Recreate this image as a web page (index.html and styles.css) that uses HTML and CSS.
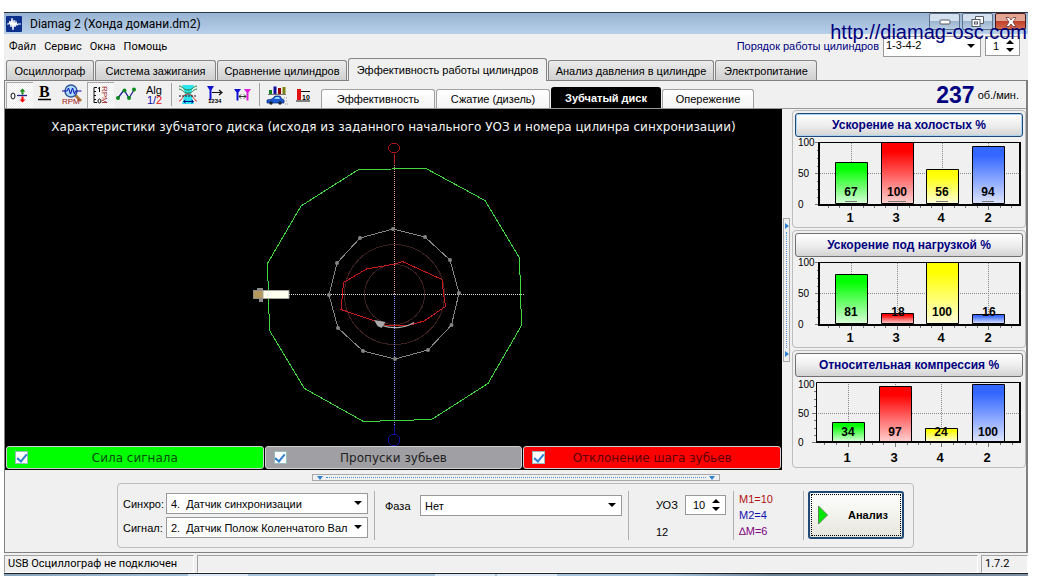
FILE: index.html
```
<!DOCTYPE html>
<html lang="ru">
<head>
<meta charset="utf-8">
<title>Diamag 2</title>
<link rel="stylesheet" href="styles.css">
</head>
<body>
<div class="window">
  <header class="titlebar">
    <svg class="app-icon" width="16" height="16" viewBox="0 0 16 16" aria-hidden="true"><rect width="16" height="16" rx="1" fill="#0d2f8c"/><path d="M1 8h2l1-3 1 6 1-9 1 12 1-10 1 7 1-5 1 3 1-1h3" fill="none" stroke="#fff" stroke-width="1.2"/></svg>
    <span class="caption">Diamag 2 (Хонда домани.dm2)</span>
    <div class="win-buttons">
      <button class="win-btn" aria-label="Свернуть"><svg width="12" height="6" viewBox="0 0 12 6"><rect x="1" y="1" width="10" height="4" rx="1" fill="#fff" stroke="#555c66"/></svg></button>
      <button class="win-btn" aria-label="Восстановить"><svg width="13" height="12" viewBox="0 0 13 12"><g fill="#fff" stroke="#555c66"><path d="M4.500.5h8v7h-8z"/><rect x="1" y="3.500" width="8" height="7"/><rect x="3.500" y="6" width="3" height="2"/></g></svg></button>
      <button class="win-btn close" aria-label="Закрыть"><svg width="12" height="10" viewBox="0 0 12 10"><path d="M1 .5h3l2 2.500 2-2.500h3L8 5l3 4.500H8L6 7 4 9.500H1L4 5z" fill="#fff" stroke="#6b3a3a" stroke-width=".8"/></svg></button>
    </div>
    <a class="site-link" href="#">http://diamag-osc.com</a>
  </header>

  <div class="menu-row">
    <nav class="menu">
      <button>Файл</button><button>Сервис</button><button>Окна</button><button>Помощь</button>
    </nav>
    <div class="order">
      <label for="order">Порядок работы цилиндров</label>
      <span class="select order-select"><select id="order"><option>1-3-4-2</option></select></span>
      <span class="spin"><input id="cyl" type="number" value="1" aria-label="Цилиндр"><i></i></span>
    </div>
  </div>

  <div class="tabs">
    <button class="tab">Осциллограф</button>
    <button class="tab">Система зажигания</button>
    <button class="tab">Сравнение цилиндров</button>
    <button class="tab active">Эффективность работы цилиндров</button>
    <button class="tab">Анализ давления в цилиндре</button>
    <button class="tab">Электропитание</button>
  </div>

  <div class="page">
    <div class="toolbar">
      <button class="tool pressed" aria-label="Ноль"><svg viewBox="6 82 27 26"><ellipse cx="13" cy="96" rx="2" ry="3" fill="none" stroke="#111"/><path d="M17 95.500h10" stroke="#22228e" stroke-width="1.300"/><path d="M22.500 88.500l3 3h-2v3h-2v-3h-2z" fill="#1a8a1a"/><path d="M22.500 102.500l3-3h-2v-3h-2v3h-2z" fill="#e00"/></svg></button>
      <button class="tool" aria-label="Жирный"><svg viewBox="33 82 27 26"><text class="serif-b" x="39" y="97">B</text><path d="M38 99.500h13" stroke="#000" stroke-width="1.500"/></svg></button>
      <button class="tool" aria-label="Обороты"><svg viewBox="60 82 27 26"><path d="M75 95l6 6" stroke="#b07840" stroke-width="3"/><circle cx="71" cy="91" r="6" fill="#a8dcff" stroke="#34589a" stroke-width="1.400"/><path d="M62 91h5l1.500-3 2 6 2-6 2 6 1-3h6" fill="none" stroke="#0808b0"/><text class="micro red" x="62" y="104">RPM</text></svg></button>
      <button class="tool pressed" aria-label="Шкала оборотов"><svg viewBox="87 82 27 26"><path d="M97 87.500h-3v15h3M94 91.500h2M94 95.500h2M94 99.500h2M99.500 87v5M98 88.500l1.500-1" fill="none" stroke="#111"/><ellipse cx="99.500" cy="101" rx="1.500" ry="2" fill="none" stroke="#111"/><text class="micro red" transform="translate(102 86) rotate(90)" x="0" y="0">RPM</text></svg></button>
      <button class="tool" aria-label="График"><svg viewBox="114 82 27 26"><path d="M118 98l6-8 5 8 5-8" fill="none" stroke="#22228e" stroke-width="1.300"/><g fill="#0a8a1a"><circle cx="118" cy="98" r="2"/><circle cx="124.500" cy="90.500" r="2"/><circle cx="129" cy="98" r="2"/><circle cx="134" cy="89.500" r="2"/></g></svg></button>
      <button class="tool" aria-label="Алгоритм"><svg viewBox="140 82 27 26"><text class="small" x="145" y="94">Alg</text><text class="small blue" x="146" y="104">1/</text><text class="small brightred" x="155" y="104">2</text></svg></button>
      <i class="sep"></i>
      <button class="tool" aria-label="Форма сигнала"><svg viewBox="175 82 27 26"><path d="M182 85h12l-3 8 3 11h-12l3-11z" fill="#2ce4ee"/><path d="M179 86c5 1 4 4 9 4s4-3 9-4M179 89c5 1 4 4 9 4s4-3 9-4" fill="none" stroke="#15803a"/><path d="M179 101c3 0 4-7 9-7s6 7 9 7" fill="none" stroke="#d22"/><path d="M179 96h18" stroke="#111" stroke-dasharray="2 1"/><path d="M184 101.500h9M185.500 100l-2 1.500 2 1.500M191.500 100l2 1.500-2 1.500" fill="none" stroke="#00008b"/></svg></button>
      <button class="tool" aria-label="Метки цилиндров"><svg viewBox="202 82 27 26"><path d="M207 86h7l-2.500 4v10h-2V90z" fill="#1010d0"/><path d="M212 92.500h9M219 90l3 2.500-3 2.500" fill="none" stroke="#111" stroke-width="1.200"/><text class="digits" x="208" y="103">1234</text></svg></button>
      <button class="tool" aria-label="Интервал"><svg viewBox="229 82 27 26"><path d="M234 89h7l-2.500 3.500v8h-2v-8z" fill="#1010d0"/><path d="M244 89h7l-2.500 3.500v8h-2v-8z" fill="#e018d8"/><path d="M239 96.500h7M241 94.500l-2 2 2 2M244 94.500l2 2-2 2" fill="none" stroke="#333"/></svg></button>
      <i class="sep"></i>
      <button class="tool" aria-label="Автомобиль"><svg viewBox="263 82 27 26"><path d="M268 94.500h18" stroke="#777"/><path d="M269 90h3v4h-3z" fill="#16801c"/><path d="M273.500 86.500h3V94h-3z" fill="#1010a0"/><path d="M278 88h3v6h-3z" fill="#900"/><path d="M282.500 87h3v7h-3z" fill="#808010"/><path d="M267 100l5-1 3-3h5l2 3 2 1v3h-17z" fill="#1c58d0" stroke="#062a78" stroke-width=".7"/><path d="M274 99l2-2h3l1 2z" fill="#8edcff"/><circle cx="271" cy="103" r="1.700" fill="#123"/><circle cx="280" cy="103" r="1.700" fill="#123"/><path d="M284 98h4M284 101h4M285 104h3" stroke="#999" stroke-dasharray="1 1"/></svg></button>
      <button class="tool" aria-label="Десять"><svg viewBox="290 82 27 26"><path d="M297 89h4v11h-4z" fill="#e01010"/><path d="M301 91.500h9M296 101h14" stroke="#111"/><text class="digits ten" x="302" y="99.500">10</text></svg></button>
      <div class="subtabs">
        <button class="subtab s-wide">Эффективность</button>
        <button class="subtab s-wide">Сжатие (дизель)</button>
        <button class="subtab s-wide on">Зубчатый диск</button>
        <button class="subtab s-last">Опережение</button>
      </div>
      <div class="rpm"><strong>237</strong> об./мин.</div>
    </div>

    <div class="content">
      <section class="plot">
        <h1>Характеристики зубчатого диска (исходя из заданного начального УОЗ и номера цилинра синхронизации)</h1>
        <svg class="disc" viewBox="239 138 310 308" aria-hidden="true">
          <g fill="none" shape-rendering="crispEdges">
            <circle cx="394.500" cy="294.500" r="50" stroke="#3c1f1f"/>
            <circle cx="394.500" cy="294.500" r="30" stroke="#3c1f1f"/>
            <path d="M261 294.500h264" stroke="#ddd" stroke-dasharray="1 1"/>
            <path d="M394.500 163v131" stroke="#e89a90" stroke-dasharray="1 1"/>
            <path d="M394.500 154v10" stroke="#c02020"/>
            <path d="M394.500 294v132" stroke="#8c94ff" stroke-dasharray="1 1"/>
            <path d="M394.500 425v9" stroke="#1010a0"/>
            <path d="M358.500 169.500L426 168.500 485 200.500 519.500 258 521.500 325.500 488 383.500 431.500 419.500 363.500 421.500 304.500 388.500 269.500 330.500 267.500 263.500 301 206z" stroke="#3fd83f"/>
            <path d="M393 229L425 237 450 260 459 293 451.500 325 428 350 395 359 363 351 338 328 329 295 337 263 360 238z" stroke="#858585"/>
            <path d="M402.500 261.500L442 279.500 443.500 293.500 445.500 306.500 424 321 410 325 386.500 325.500 375 321 341 309.500 343.500 282.500 366.500 269 395 264z" stroke="#c81c1c"/>
          </g>
          <g fill="#858585"><circle cx="393" cy="229" r="2"/><circle cx="425" cy="237" r="2"/><circle cx="450" cy="260" r="2"/><circle cx="459" cy="293" r="2"/><circle cx="451.500" cy="325" r="2"/><circle cx="428" cy="350" r="2"/><circle cx="395" cy="359" r="2"/><circle cx="363" cy="351" r="2"/><circle cx="338" cy="328" r="2"/><circle cx="329" cy="295" r="2"/><circle cx="337" cy="263" r="2"/><circle cx="360" cy="238" r="2"/></g>
          <path d="M414 322.500c-8 5-20 7-32 3" fill="none" stroke="#b0b0b0" stroke-width="1.300"/>
          <path d="M374 320l11.500 2-4 6-4-2z" fill="#aaa"/>
          <path d="M391.500 143.500h5l3 3v3l-3 3h-5l-3-3v-3z" fill="none" stroke="#b01818"/>
          <path d="M391.500 434.500h5l3 3v5l-3 3h-5l-3-3v-5z" fill="none" stroke="#10109c"/>
          <path d="M257 288h6v14h-4v-3h-6v-9h4z" fill="#8d8c88"/><path d="M254 291h9v7h-9z" fill="#b39a5c"/><path d="M263 290.500h26v8h-26z" fill="#fffff0" stroke="#a5a59c"/>
        </svg>
        <div class="legend">
          <label class="green"><input type="checkbox" checked><span>Сила сигнала</span></label>
          <label class="gray"><input type="checkbox" checked><span>Пропуски зубьев</span></label>
          <label class="red-bg"><input type="checkbox" checked><span>Отклонение шага зубьев</span></label>
        </div>
      </section>

      <div class="split-v"><i></i><i></i></div>

      <aside class="charts">
        <svg class="defs" width="0" height="0" aria-hidden="true"><defs>
          <linearGradient id="g" x2="0" y2="1"><stop offset=".15" stop-color="#00ff00"/><stop offset="1" stop-color="#d8ffd8"/></linearGradient>
          <linearGradient id="r" x2="0" y2="1"><stop offset=".15" stop-color="#ff0000"/><stop offset="1" stop-color="#ffd0d0"/></linearGradient>
          <linearGradient id="y" x2="0" y2="1"><stop offset=".15" stop-color="#ffff00"/><stop offset="1" stop-color="#ffffd8"/></linearGradient>
          <linearGradient id="b" x2="0" y2="1"><stop offset=".15" stop-color="#3366ff"/><stop offset="1" stop-color="#dce4ff"/></linearGradient>
        </defs></svg>
        <section class="chart">
          <button class="chart-btn focus">Ускорение на холостых %</button>
          <svg viewBox="793 138 232 88">
            <path class="grid" d="M820 173.500h200M851.500 143v60M897.500 143v60M942.500 143v60M988.500 143v60"/>
            <path class="ticks" d="M815 142.500h4M815 173.500h4M815 204.500h4M817 150.500h2M817 158.500h2M817 166.500h2M817 181.500h2M817 189.500h2M817 197.500h2M851.500 206v4M897.500 206v4M942.500 206v4M988.500 206v4M828.500 206v2M839.500 206v2M863.500 206v2M874.500 206v2M885.500 206v2M909.500 206v2M920.500 206v2M931.500 206v2M954.500 206v2M965.500 206v2M977.500 206v2M1000.500 206v2M1011.500 206v2"/>
            <path class="frame" d="M819 142.500h201"/><path class="frame thick" d="M819 142v63h201V142"/>
            <g class="bars"><path fill="url(#g)" d="M835.500 162.500h32v41h-32z"/><path fill="url(#r)" d="M881.500 142.500h32v61h-32z"/><path fill="url(#y)" d="M926.500 169.500h32v34h-32z"/><path fill="url(#b)" d="M972.500 146.500h32v57h-32z"/></g>
            <path stroke="#777" d="M845 201.500h12M888 201.500h18M936 201.500h12M982 201.500h12"/>
            <g class="val"><text x="851" y="196">67</text><text x="897" y="196">100</text><text x="942" y="196">56</text><text x="988" y="196">94</text></g>
            <g class="cat"><text x="850" y="222">1</text><text x="896" y="222">3</text><text x="941" y="222">4</text><text x="988" y="222">2</text></g>
            <g class="scale"><text x="798" y="146">100</text><text x="798" y="177">50</text><text x="798" y="208">0</text></g>
          </svg>
        </section>
        <section class="chart">
          <button class="chart-btn">Ускорение под нагрузкой %</button>
          <svg viewBox="793 138 232 88">
            <path class="grid" d="M820 173.500h200M851.500 143v60M897.500 143v60M942.500 143v60M988.500 143v60"/>
            <path class="ticks" d="M815 142.500h4M815 173.500h4M815 204.500h4M817 150.500h2M817 158.500h2M817 166.500h2M817 181.500h2M817 189.500h2M817 197.500h2M851.500 206v4M897.500 206v4M942.500 206v4M988.500 206v4M828.500 206v2M839.500 206v2M863.500 206v2M874.500 206v2M885.500 206v2M909.500 206v2M920.500 206v2M931.500 206v2M954.500 206v2M965.500 206v2M977.500 206v2M1000.500 206v2M1011.500 206v2"/>
            <path class="frame" d="M819 142.500h201"/><path class="frame thick" d="M819 142v63h201V142"/>
            <g class="bars"><path fill="url(#g)" d="M835.500 154.500h32v49h-32z"/><path fill="url(#r)" d="M881.500 193.500h32v10h-32z"/><path fill="url(#y)" d="M926.500 142.500h32v61h-32z"/><path fill="url(#b)" d="M972.500 194.500h32v9h-32z"/></g>
            <g class="val"><text x="851" y="196">81</text><text x="898" y="196">18</text><text x="942" y="196">100</text><text x="989" y="196">16</text></g>
            <g class="cat"><text x="850" y="222">1</text><text x="896" y="222">3</text><text x="941" y="222">4</text><text x="988" y="222">2</text></g>
            <g class="scale"><text x="798" y="146">100</text><text x="798" y="177">50</text><text x="798" y="208">0</text></g>
          </svg>
        </section>
        <section class="chart">
          <button class="chart-btn">Относительная компрессия %</button>
          <svg viewBox="793 378 232 88">
            <path class="grid" d="M818 413.500h202M848.500 384v57M895.500 384v57M941.500 384v57M988.500 384v57"/>
            <path class="ticks" d="M812 413.500h4M812 442.500h4M814 391.500h2M814 399.500h2M814 406.500h2M814 420.500h2M814 428.500h2M814 435.500h2M848.500 443v4M895.500 443v4M941.500 443v4M988.500 443v4M824.500 443v2M836.500 443v2M860.500 443v2M872.500 443v2M883.500 443v2M907.500 443v2M918.500 443v2M930.500 443v2M953.500 443v2M965.500 443v2M976.500 443v2M1000.500 443v2M1012.500 443v2"/>
            <path class="frame" d="M816.500 442V382.500H1020"/><path class="frame thick" d="M816 442h204V382"/>
            <g class="bars"><path fill="url(#g)" d="M832.500 422.500h32v19h-32z"/><path fill="url(#r)" d="M879.500 386.500h32v55h-32z"/><path fill="url(#y)" d="M925.500 428.500h32v13h-32z"/><path fill="url(#b)" d="M972.500 384.500h32v57h-32z"/></g>
            <g class="val"><text x="848" y="436">34</text><text x="895" y="436">97</text><text x="941" y="436">24</text><text x="988" y="436">100</text></g>
            <g class="cat"><text x="847" y="462">1</text><text x="894" y="462">3</text><text x="940" y="462">4</text><text x="987" y="462">2</text></g>
            <g class="scale"><text x="798" y="388">100</text><text x="798" y="417">50</text><text x="798" y="446">0</text></g>
          </svg>
        </section>
      </aside>
    </div>

    <div class="split-h"><i></i><i></i></div>

    <form class="controls">
      <div class="pair">
        <label for="sync">Синхро:</label>
        <span class="select"><select id="sync"><option>4.&nbsp; Датчик синхронизации</option></select></span>
        <label for="sig">Сигнал:</label>
        <span class="select"><select id="sig"><option>2.&nbsp; Датчик Полож Коленчатого Вал</option></select></span>
      </div>
      <div class="cell phase">
        <label for="phase">Фаза</label>
        <span class="select"><select id="phase"><option>Нет</option></select></span>
      </div>
      <div class="cell angle">
        <label for="uoz">УОЗ</label>
        <span class="spin"><input id="uoz" type="number" value="10"><i></i></span>
        <output>12</output>
      </div>
      <div class="marks"><span class="m1">M1=10</span><span class="m2">M2=4</span><span class="dm">∆M=6</span></div>
      <div class="run-cell"><button type="button" class="run"><svg width="10" height="20" viewBox="0 0 10 20"><path d="M.5 1v18l9-9z" fill="#00e800" stroke="#5a8a5a"/></svg><span>Анализ</span></button></div>
    </form>
  </div>

  <footer class="status"><span class="usb">USB Осциллограф не подключен</span><span class="mid"></span><span class="ver">1.7.2</span></footer>
  <div class="taskbar"><i></i><i></i><i></i></div>
</div>
</body>
</html>
```
FILE: styles.css
```
* { box-sizing: border-box; }
body {
  margin: 0;
  padding: 12px 12px 0 4px;
  background: #fff;
  color: #000;
  font: 11px/14px "Liberation Sans", Arial, sans-serif;
}
button, select, input { font: inherit; color: inherit; margin: 0; }
button { padding: 0; }
svg { display: block; }
.window { background: #f0f0f0; }

/* title bar */
.titlebar {
  position: relative;
  display: flex;
  align-items: center;
  height: 22px;
  padding: 0 2px;
  border-top: 1px solid #2c3440;
  background: linear-gradient(#98b4d2, #b8cfe9);
}
.caption { margin-left: 8px; font: 12px/20px Roboto, sans-serif; }
.win-buttons { display: flex; gap: 2px; margin-left: auto; align-self: flex-start; }
.win-btn {
  display: grid;
  place-items: center;
  width: 31px;
  height: 17px;
  border: 1px solid #5d7088;
  border-radius: 2px;
  background: linear-gradient(#d3e0ee 45%, #9db5cf 50%, #b9cee4);
}
.win-btn.close { border-color: #4c1a1a; background: linear-gradient(#e2a493 45%, #c2412a 50%, #cf6a50); }
.site-link {
  position: absolute;
  z-index: 2;
  right: 1px;
  top: 7px;
  color: #00007c;
  font-size: 20px;
  line-height: 24px;
  text-decoration: none;
}

/* menu */
.menu-row { display: flex; justify-content: space-between; height: 24px; padding: 2px 8px 0 5px; }
.menu { display: flex; gap: 8px; }
.menu button { border: 0; background: none; font: 11px/22px Roboto, sans-serif; }
.order { display: flex; align-items: flex-start; gap: 4px; color: #000080; }
.order label { line-height: 20px; }
.select { position: relative; display: block; }
.select::after {
  content: "";
  position: absolute;
  right: 6px;
  top: 8px;
  border: 4px solid transparent;
  border-top-color: #000;
  border-bottom: 0;
}
select {
  display: block;
  appearance: none;
  width: 100%;
  height: 21px;
  padding: 0 19px 0 4px;
  border: 1px solid #999;
  border-radius: 0;
  background: #fff;
  color: #000;
}
.order-select { width: 98px; }
.order-select select { padding: 0 19px 4px 2px; }
.spin { position: relative; display: block; width: 35px; }
.spin input {
  display: block;
  appearance: textfield;
  width: 100%;
  height: 20px;
  padding: 0 0 0 7px;
  border: 1px solid #999;
  background: #fff;
  color: #000;
}
.spin input::-webkit-inner-spin-button { appearance: none; }
.spin i::before, .spin i::after { content: ""; position: absolute; right: 6px; border: 4px solid transparent; }
.spin i::before { top: 4px; border-top: 0; border-bottom-color: #000; }
.spin i::after { bottom: 4px; border-bottom: 0; border-top-color: #000; }

/* tabs */
.tabs { display: grid; grid-template-columns: 88px 121px 130px 199px 166px 102px; align-items: end; gap: 1px; height: 22px; padding-left: 2px; }
.tab {
  height: 20px;
  padding: 0;
  border: 1px solid #858585;
  border-bottom: 0;
  border-radius: 3px 3px 0 0;
  background: linear-gradient(#ececec, #cfcfcf);
  white-space: nowrap;
}
.tab.active { height: 23px; margin-bottom: -1px; background: #f0f0f0; z-index: 1; }

/* page */
.page { border: 1px solid #808080; border-right-width: 2px; }
.toolbar { display: flex; height: 28px; padding-left: 1px; border-bottom: 1px solid #999; }
.tool { width: 27px; height: 26px; margin-top: 1px; border: 0; background: none; }
.tool svg { width: 27px; height: 26px; }
.tool.pressed { background: repeating-conic-gradient(#fff 0 25%, #eee 0 50%) 0 0 / 2px 2px; box-shadow: inset 1px 1px #a8a8a8; }
.sep { width: 1px; height: 23px; margin: 2px 3px; background: #a0a0a0; }
.serif-b { font: bold 16px "Liberation Serif", serif; }
.micro { font: 8px "Liberation Sans", sans-serif; }
.small { font: 11px "Liberation Sans", sans-serif; }
.digits { font: bold 6px "Liberation Sans", sans-serif; }
.ten { font-size: 7px; }
.red { fill: #a01818; }
.blue { fill: #1010b0; }
.brightred { fill: #e81010; }
.subtabs { display: flex; align-items: flex-end; gap: 1px; margin-left: 4px; }
.subtab {
  height: 19px;
  padding: 0;
  border: 1px solid #a0a0a0;
  border-bottom: 0;
  border-radius: 3px 3px 0 0;
  background: linear-gradient(#fff, #f4f4f4);
}
.s-wide { width: 114px; }
.s-last { width: 92px; }
.subtab.on { width: 110px; height: 21px; border-color: #000; background: #000; color: #fff; font-weight: bold; }
.rpm { display: flex; align-items: center; gap: 3px; margin-left: auto; padding-right: 7px; }
.rpm strong { color: #000080; font-size: 23px; line-height: 26px; }

.content { display: flex; }
.plot { flex: 1; min-width: 0; padding: 9px 1px 1px; background: #000; }
.plot h1 {
  margin: 0 0 2px;
  color: #f4f4f4;
  font: 12px/18px "DejaVu Sans", Verdana, sans-serif;
  text-align: center;
  white-space: nowrap;
}
.disc { width: 310px; height: 308px; margin: 0 auto; }
.legend { display: grid; grid-template-columns: 1fr 1fr 1fr; gap: 1px; font: 12px/20px "DejaVu Sans", Verdana, sans-serif; }
.legend label { display: flex; align-items: center; height: 23px; padding: 0 8px; border: 1px solid #d0d0d0; border-radius: 3px; }
.legend span { flex: 1; padding-right: 13px; text-align: center; }
.green { background: #00ff00; color: #064d06; }
.gray { background: #a09fa4; color: #222; }
.red-bg { background: #ff0000; color: #5c0000; }
.legend input { appearance: none; display: grid; place-items: center; width: 13px; height: 13px; border: 1px solid #9bb; background: #fff; }
.legend input:checked::before { content: ""; width: 4px; height: 8px; margin-top: -2px; border: solid #2e7fd0; border-width: 0 2px 2px 0; transform: rotate(40deg); }

/* splitters */
.split-v, .split-h { display: flex; align-items: center; gap: 3px; border: 1px solid #a8a8a8; }
.split-v { align-self: center; flex-direction: column; width: 7px; height: 144px; margin: 0 2px 0 1px; padding: 4px 0; }
.split-h { width: 408px; height: 7px; margin: 4px auto 2px; padding: 0 4px; }
.split-v::before, .split-h::before { content: ""; order: 1; flex: 1; border: 0 dotted #4a92d6; }
.split-v::before { border-left-width: 1px; }
.split-h::before { border-top-width: 1px; }
.split-v i, .split-h i { border: 3px solid transparent; }
.split-v i { border-left: 4px solid #2e7fd0; border-right: 0; }
.split-h i { border-top: 4px solid #2e7fd0; border-bottom: 0; }
.split-v i:last-child, .split-h i:last-child { order: 2; }

/* charts */
.charts { width: 234px; padding-top: 1px; display: flex; flex-direction: column; gap: 2px; }
.defs { position: absolute; }
.chart { height: 118px; padding: 2px 0 0; border: 1px solid #bcbcbc; border-radius: 4px; }
.chart-btn {
  display: block;
  width: calc(100% - 4px);
  height: 24px;
  margin: 0 2px 1px;
  border: 1px solid #707070;
  border-radius: 3px;
  background: linear-gradient(#fff, #eee 50%, #d4d4d4);
  color: #000080;
  font-size: 12px;
  font-weight: bold;
}
.chart-btn.focus { border-color: #1f4a78; box-shadow: inset 0 0 0 1px #a9d4f2; }
.chart svg { width: 232px; height: 88px; overflow: visible; }
.grid { stroke: #888; stroke-dasharray: 1 1; }
.ticks { stroke: #777; }
.frame { fill: none; stroke: #000; }
.thick { stroke-width: 2px; }
.bars { stroke: #000; }
.val { font: bold 12px "Liberation Sans", sans-serif; text-anchor: middle; }
.cat { font: bold 13px "Liberation Sans", sans-serif; text-anchor: middle; }
.scale { font: 10px "Liberation Sans", sans-serif; }

/* controls */
.controls { display: flex; width: 797px; height: 65px; margin: 0 auto 4px; padding: 7px 8px 7px 5px; border: 1px solid #bcbcbc; border-radius: 4px; }
.pair { display: grid; grid-template-columns: 40px 202px; gap: 3px; align-content: center; align-items: center; width: 252px; border-right: 1px solid #b0b0b0; }
.cell { display: grid; align-content: start; align-items: center; border-right: 1px solid #b0b0b0; }
.phase { grid-template-columns: 35px 202px; width: 254px; padding: 4px 0 0 10px; }
.angle { grid-template-columns: 28px 41px; gap: 10px 1px; width: 105px; padding: 4px 0 0 27px; }
.angle .spin { width: 41px; }
.marks { display: grid; align-content: start; width: 70px; padding-left: 5px; line-height: 16px; border-right: 1px solid #b0b0b0; }
.m1 { color: #b01010; }
.m2 { color: #1010b0; }
.dm { color: #800080; }
.run-cell { flex: 1; padding-left: 4px; }
.run {
  display: flex;
  align-items: center;
  width: 96px;
  height: 48px;
  padding: 0 8px;
  border: 2px solid #1f4a78;
  border-radius: 3px;
  outline: 1px dotted #000;
  outline-offset: -4px;
  background: linear-gradient(#fff, #e6e6dc);
  font-weight: bold;
}
.run span { flex: 1; padding-left: 14px; text-align: center; }

/* status bar */
.status { display: flex; gap: 3px; padding-top: 2px; font: 11px/16px Roboto, sans-serif; }
.status span { height: 18px; border: 1px solid #a0a0a0; border-right-color: #fff; border-bottom-color: #fff; padding-left: 3px; }
.usb { width: 190px; }
.mid { flex: 1; }
.ver { width: 47px; }
.taskbar { display: flex; gap: 2px; height: 3px; padding-left: 184px; border-top: 1px solid #222; background: linear-gradient(90deg, #88a4bc, #a8c4e0 20%, #a8c4e0 65%, #6a8094 75%, #7d90a4); }
.taskbar i { width: 60px; background: #dbe8f5; }
.taskbar i:first-child { margin-right: 185px; }
```
